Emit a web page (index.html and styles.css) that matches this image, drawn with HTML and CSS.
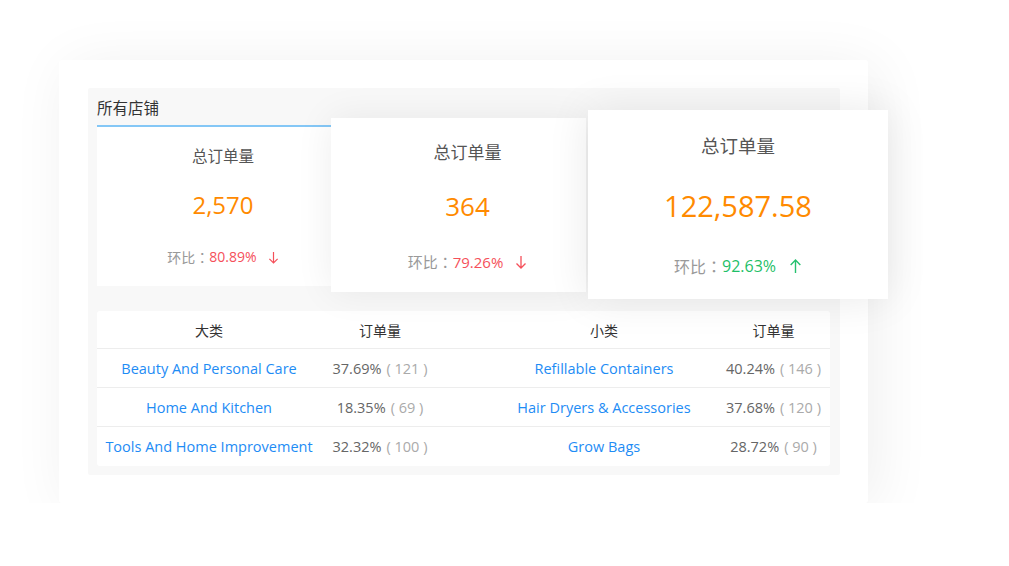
FILE: index.html
```html
<!DOCTYPE html>
<html lang="zh-CN">
<head>
<meta charset="utf-8">
<title>所有店铺</title>
<link rel="stylesheet" href="styles.css">
</head>
<body>
<div class="frame">
  <div class="panel">
    <div class="panel-head">所有店铺</div>
    <div class="cards">
      <div class="card card-1">
        <div class="card-title">总订单量</div>
        <div class="card-num">2,570</div>
        <div class="card-cmp">环比<span class="colon">：</span><span class="down">80.89%</span>
          <svg class="arrow" viewBox="0 0 12 14" width="11" height="13"><path d="M6 1V13M1.5 8.5L6 13L10.5 8.5" fill="none" stroke="#f5505a" stroke-width="1.3"/></svg>
        </div>
      </div>
      <div class="card card-2">
        <div class="card-title">总订单量</div>
        <div class="card-num">364</div>
        <div class="card-cmp">环比<span class="colon">：</span><span class="down">79.26%</span>
          <svg class="arrow" viewBox="0 0 12 14" width="12" height="14"><path d="M6 1V13M1.5 8.5L6 13L10.5 8.5" fill="none" stroke="#f5505a" stroke-width="1.3"/></svg>
        </div>
      </div>
      <div class="card card-3">
        <div class="card-title">总订单量</div>
        <div class="card-num">122,587.58</div>
        <div class="card-cmp">环比<span class="colon">：</span><span class="up">92.63%</span>
          <svg class="arrow" viewBox="0 0 12 14" width="13" height="15"><path d="M6 13V1M1.5 5.5L6 1L10.5 5.5" fill="none" stroke="#25c16f" stroke-width="1.3"/></svg>
        </div>
      </div>
    </div>
    <div class="table">
      <div class="row row-head">
        <div class="cell c1">大类</div>
        <div class="cell c2">订单量</div>
        <div class="cell c3">小类</div>
        <div class="cell c4">订单量</div>
      </div>
      <div class="row">
        <div class="cell c1 link">Beauty And Personal Care</div>
        <div class="cell c2 val">37.69%<span class="cnt">( 121 )</span></div>
        <div class="cell c3 link">Refillable Containers</div>
        <div class="cell c4 val">40.24%<span class="cnt">( 146 )</span></div>
      </div>
      <div class="row">
        <div class="cell c1 link">Home And Kitchen</div>
        <div class="cell c2 val">18.35%<span class="cnt">( 69 )</span></div>
        <div class="cell c3 link">Hair Dryers &amp; Accessories</div>
        <div class="cell c4 val">37.68%<span class="cnt">( 120 )</span></div>
      </div>
      <div class="row row-last">
        <div class="cell c1 link">Tools And Home Improvement</div>
        <div class="cell c2 val">32.32%<span class="cnt">( 100 )</span></div>
        <div class="cell c3 link">Grow Bags</div>
        <div class="cell c4 val">28.72%<span class="cnt">( 90 )</span></div>
      </div>
    </div>
  </div>
</div>
</body>
</html>
```

FILE: styles.css
```css
* { box-sizing: border-box; }
html, body {
  margin: 0;
  padding: 0;
  background: #ffffff;
}
body {
  font-family: "Open Sans", "Noto Sans CJK SC", sans-serif;
  color: #333;
  padding: 60px 0 0 59px;
}
.frame {
  width: 809px;
  background: #fff;
  border-radius: 3px;
  padding: 28px 28px 28px 29px;
  box-shadow: 8px 6px 60px rgba(0, 0, 0, 0.065);
}
.panel {
  background: #f8f8f8;
  border-radius: 2px;
  padding: 0 10px 9px 9px;
}
.panel-head {
  height: 37px;
  padding-top: 9px;
  font-family: "Noto Sans CJK SC", sans-serif;
  font-size: 15.5px;
  line-height: 20px;
  color: #333;
}
.cards {
  display: flex;
  align-items: flex-start;
  margin-top: -15px;
}
.card {
  background: #fff;
  display: flex;
  flex-direction: column;
  align-items: center;
  flex: none;
  position: relative;
  white-space: nowrap;
}
.card-title {
  font-family: "Noto Sans CJK SC", sans-serif;
  color: #555;
}
.card-num {
  color: #ff8a00;
}
.card-cmp {
  display: flex;
  align-items: center;
  font-family: "Noto Sans CJK SC", sans-serif;
  color: #999;
}
.card-cmp .colon {
  font-family: "Noto Sans CJK TC", sans-serif;
}
.card-cmp .down,
.card-cmp .up {
  font-family: "Open Sans", sans-serif;
}
.down { color: #f5505a; }
.up { color: #1fbf68; }
.arrow { display: block; }

.card-1 {
  width: 234px;
  margin-top: 15px;
  border-top: 2px solid #84c7f6;
  padding: 18px 0 19px 18px;
  z-index: 1;
}
.card-1 .card-title { font-size: 15.5px; line-height: 20px; }
.card-1 .card-num { font-size: 24px; line-height: 34px; margin-top: 23px; }
.card-1 .card-cmp { font-size: 14px; line-height: 20px; margin-top: 25px; }
.card-1 .arrow { margin-left: 11px; }

.card-2 {
  width: 255px;
  margin-top: 8px;
  padding: 23px 0 19px 18px;
  z-index: 2;
  box-shadow: 0 0 36px rgba(0, 0, 0, 0.07);
}
.card-2 .card-title { font-size: 17px; line-height: 22px; }
.card-2 .card-num { font-size: 26px; line-height: 36px; margin-top: 25px; }
.card-2 .card-cmp { font-size: 15px; line-height: 22px; margin-top: 27px; }
.card-2 .arrow { margin-left: 12px; }

.card-3 {
  width: 300px;
  margin-left: 2px;
  padding: 23px 0 22px 0;
  z-index: 3;
  box-shadow: 0 0 40px rgba(0, 0, 0, 0.09);
}
.card-3 .card-title { font-size: 18.5px; line-height: 24px; }
.card-3 .card-num { font-size: 29px; line-height: 40px; margin-top: 29px; }
.card-3 .card-cmp { font-size: 16px; line-height: 22px; margin-top: 29px; }
.card-3 .arrow { margin-left: 13px; }

.table {
  margin-top: 12px;
  background: #fff;
  border-radius: 3px;
  font-size: 14.5px;
}
.row {
  display: grid;
  grid-template-columns: 224px 118px 300px 91px;
  height: 39px;
  border-bottom: 1px solid #ededed;
}
.row-head { height: 38px; }
.row-last { border-bottom: none; }
.cell {
  display: flex;
  align-items: center;
  justify-content: center;
  white-space: nowrap;
  min-width: 0;
}
.c3 { padding-left: 30px; }
.c4 { padding-right: 22px; }
.row-head .cell {
  font-family: "Noto Sans CJK SC", sans-serif;
  font-size: 14px;
  color: #333;
}
.link { color: #1e8cf5; }
.val { color: #666; }
.cnt {
  color: #aaa;
  margin-left: 5px;
}
```
